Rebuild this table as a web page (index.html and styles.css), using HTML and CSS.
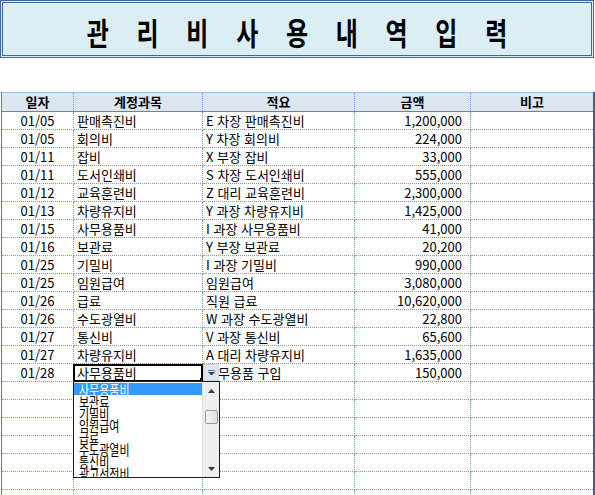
FILE: index.html
```html
<!DOCTYPE html>
<html lang="ko">
<head>
<meta charset="utf-8">
<title>관리비 사용 내역 입력</title>
<link rel="stylesheet" href="styles.css">
</head>
<body>
<div class="title-box"><h1 class="title">관 리 비 사 용 내 역 입 력</h1></div>
<div class="sheet">
  <div class="row head"><div class="cell">일자</div><div class="cell">계정과목</div><div class="cell">적요</div><div class="cell">금액</div><div class="cell">비고</div></div>
  <div class="row"><div class="cell date">01/05</div><div class="cell acct">판매촉진비</div><div class="cell memo">E 차장 판매촉진비</div><div class="cell amt">1,200,000</div><div class="cell"></div></div>
  <div class="row"><div class="cell date">01/05</div><div class="cell acct">회의비</div><div class="cell memo">Y 차장 회의비</div><div class="cell amt">224,000</div><div class="cell"></div></div>
  <div class="row"><div class="cell date">01/11</div><div class="cell acct">잡비</div><div class="cell memo">X 부장 잡비</div><div class="cell amt">33,000</div><div class="cell"></div></div>
  <div class="row"><div class="cell date">01/11</div><div class="cell acct">도서인쇄비</div><div class="cell memo">S 차장 도서인쇄비</div><div class="cell amt">555,000</div><div class="cell"></div></div>
  <div class="row"><div class="cell date">01/12</div><div class="cell acct">교육훈련비</div><div class="cell memo">Z 대리 교육훈련비</div><div class="cell amt">2,300,000</div><div class="cell"></div></div>
  <div class="row"><div class="cell date">01/13</div><div class="cell acct">차량유지비</div><div class="cell memo">Y 과장 차량유지비</div><div class="cell amt">1,425,000</div><div class="cell"></div></div>
  <div class="row"><div class="cell date">01/15</div><div class="cell acct">사무용품비</div><div class="cell memo">I 과장 사무용품비</div><div class="cell amt">41,000</div><div class="cell"></div></div>
  <div class="row"><div class="cell date">01/16</div><div class="cell acct">보관료</div><div class="cell memo">Y 부장 보관료</div><div class="cell amt">20,200</div><div class="cell"></div></div>
  <div class="row"><div class="cell date">01/25</div><div class="cell acct">기밀비</div><div class="cell memo">I 과장 기밀비</div><div class="cell amt">990,000</div><div class="cell"></div></div>
  <div class="row"><div class="cell date">01/25</div><div class="cell acct">임원급여</div><div class="cell memo">임원급여</div><div class="cell amt">3,080,000</div><div class="cell"></div></div>
  <div class="row"><div class="cell date">01/26</div><div class="cell acct">급료</div><div class="cell memo">직원 급료</div><div class="cell amt">10,620,000</div><div class="cell"></div></div>
  <div class="row"><div class="cell date">01/26</div><div class="cell acct">수도광열비</div><div class="cell memo">W 과장 수도광열비</div><div class="cell amt">22,800</div><div class="cell"></div></div>
  <div class="row"><div class="cell date">01/27</div><div class="cell acct">통신비</div><div class="cell memo">V 과장 통신비</div><div class="cell amt">65,600</div><div class="cell"></div></div>
  <div class="row"><div class="cell date">01/27</div><div class="cell acct">차량유지비</div><div class="cell memo">A 대리 차량유지비</div><div class="cell amt">1,635,000</div><div class="cell"></div></div>
  <div class="row"><div class="cell date">01/28</div><div class="cell acct active">사무용품비
      <span class="frame"></span><span class="handle"></span>
      <span class="dd-btn"><svg width="9" height="6" viewBox="0 0 9 6"><rect x="1" y="0" width="7" height="1" fill="#5a6f92"/><polygon points="1,2 8,2 4.5,5.5" fill="#1f3a70"/></svg></span>
      <div class="list">
        <div class="opts">
          <div class="opt sel"><span>사무용품비</span></div>
          <div class="opt"><span>보관료</span></div>
          <div class="opt"><span>기밀비</span></div>
          <div class="opt"><span>임원급여</span></div>
          <div class="opt"><span>급료</span></div>
          <div class="opt"><span>수도광열비</span></div>
          <div class="opt"><span>통신비</span></div>
          <div class="opt"><span>광고선전비</span></div>
        </div>
        <div class="sb">
          <div class="sb-arrow"><svg width="7" height="4" viewBox="0 0 7 4"><polygon points="0,4 7,4 3.5,0" fill="#3a3a3a"/></svg></div>
          <div class="thumb"></div>
          <div class="sb-space"></div>
          <div class="sb-arrow"><svg width="7" height="4" viewBox="0 0 7 4"><polygon points="0,0 7,0 3.5,4" fill="#3a3a3a"/></svg></div>
        </div>
      </div>
    </div><div class="cell memo">사무용품 구입</div><div class="cell amt">150,000</div><div class="cell"></div></div>
  <div class="row"><div class="cell"></div><div class="cell"></div><div class="cell"></div><div class="cell"></div><div class="cell"></div></div>
  <div class="row"><div class="cell"></div><div class="cell"></div><div class="cell"></div><div class="cell"></div><div class="cell"></div></div>
  <div class="row"><div class="cell"></div><div class="cell"></div><div class="cell"></div><div class="cell"></div><div class="cell"></div></div>
  <div class="row"><div class="cell"></div><div class="cell"></div><div class="cell"></div><div class="cell"></div><div class="cell"></div></div>
  <div class="row"><div class="cell"></div><div class="cell"></div><div class="cell"></div><div class="cell"></div><div class="cell"></div></div>
  <div class="row"><div class="cell"></div><div class="cell"></div><div class="cell"></div><div class="cell"></div><div class="cell"></div></div>
  <div class="row"><div class="cell"></div><div class="cell"></div><div class="cell"></div><div class="cell"></div><div class="cell"></div></div>
</div>
</body>
</html>
```

FILE: styles.css
```css
html, body {
  margin: 0;
  padding: 0;
  background: #fff;
  overflow: hidden;
}
body {
  width: 595px;
  height: 495px;
  font-family: "Noto Sans CJK KR", "Noto Sans", sans-serif;
  color: #000;
}
.title-box {
  width: 594px;
  height: 58px;
  box-sizing: border-box;
  border: 3px double #41669c;
  background: #daeef3;
  display: flex;
  align-items: center;
  justify-content: center;
}
.title {
  margin: 0;
  padding: 4px 0 0 10.5px;
  font-size: 24px;
  font-weight: 700;
  line-height: 1;
  letter-spacing: 10.5px;
  white-space: pre;
  transform: scaleY(1.3);
}
.sheet {
  margin-top: 34px;
  margin-left: 1px;
  width: 591px;
  border-left: 1px solid #5b7fb5;
  border-right: 2px solid #3a62a0;
}
.row {
  display: grid;
  grid-template-columns: 72px 129px 152px 116px 122px;
  height: 18px;
}
.cell {
  box-sizing: border-box;
  border-right: 1px dotted #6f9ee0;
  border-bottom: 1px dotted #6f9ee0;
  font-size: 13px;
  line-height: 17px;
  white-space: nowrap;
  overflow: hidden;
}
.cell:last-child {
  border-right: 0;
}
.head {
  height: 20px;
  box-sizing: border-box;
  background: #dce6f1;
  border-top: 1px solid #a3bcdc;
  border-bottom: 1px solid #7f7f7f;
}
.head .cell {
  border-bottom: 0;
  font-weight: 700;
  text-align: center;
  line-height: 18px;
}
.date {
  text-align: center;
}
.acct, .memo {
  padding-left: 3px;
}
.amt {
  text-align: right;
  padding-right: 8px;
}
.cell.active {
  position: relative;
  overflow: visible;
  z-index: 2;
}
.frame {
  position: absolute;
  left: -1px;
  top: 0;
  width: 130px;
  height: 18px;
  box-sizing: border-box;
  border: 2px solid #000;
}
.handle {
  position: absolute;
  left: 126px;
  top: 14px;
  width: 3px;
  height: 3px;
  background: #000;
}
.dd-btn {
  position: absolute;
  left: 129px;
  top: 0;
  width: 16px;
  height: 17px;
  box-sizing: border-box;
  background: #e1e6ee;
  border: 1px solid #cdd5e0;
  display: flex;
  align-items: center;
  justify-content: center;
}
.list {
  position: absolute;
  left: -1px;
  top: 17px;
  width: 147px;
  height: 97px;
  box-sizing: border-box;
  border: 1px solid #1a1a1a;
  background: #fff;
  display: flex;
}
.opts {
  width: 128px;
  overflow: hidden;
  padding-top: 1px;
}
.opt {
  height: 12px;
  line-height: 12px;
  padding-left: 5px;
  font-size: 11px;
  color: #000;
}
.opt span {
  display: inline-block;
  transform: scaleY(1.2);
}
.opt.sel {
  background: #3399ff;
  color: #fff;
}
.sb {
  width: 17px;
  background: #eeeeee;
  border-left: 1px solid #e2e2e2;
  box-sizing: border-box;
  display: flex;
  flex-direction: column;
  align-items: center;
}
.sb-arrow {
  height: 17px;
  width: 16px;
  display: flex;
  align-items: center;
  justify-content: center;
}
.thumb {
  margin-top: 11px;
  width: 13px;
  height: 14px;
  box-sizing: border-box;
  border: 1px solid #9a9a9a;
  border-radius: 2px;
  background: linear-gradient(to right, #f6f6f6, #dcdcdc);
}
.sb-space {
  flex: 1;
}
```
